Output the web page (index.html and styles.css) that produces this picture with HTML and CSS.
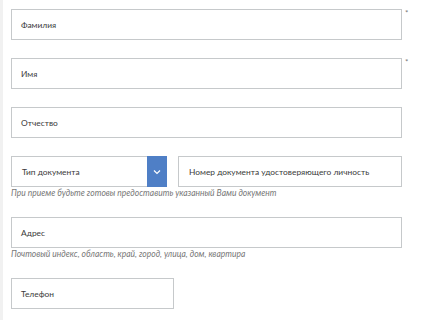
FILE: index.html
```html
<!DOCTYPE html>
<html lang="ru">
<head>
<meta charset="utf-8">
<link rel="stylesheet" href="styles.css">
</head>
<body>
<div class="page">
  <form class="form">
    <div class="group">
      <div class="row-req">
        <div class="field wide">Фамилия</div>
        <span class="req">*</span>
      </div>
    </div>
    <div class="group">
      <div class="row-req">
        <div class="field wide">Имя</div>
        <span class="req">*</span>
      </div>
    </div>
    <div class="group">
      <div class="field wide">Отчество</div>
    </div>
    <div class="group">
      <div class="doc-row">
        <div class="select">
          <span class="select-label">Тип документа</span>
          <span class="select-btn">
            <svg width="8" height="6" viewBox="0 0 8 6"><polyline points="1,1.5 4,4.5 7,1.5" fill="none" stroke="#fff" stroke-width="1.2"/></svg>
          </span>
        </div>
        <div class="field number">Номер документа удостоверяющего личность</div>
      </div>
      <div class="hint">При приеме будьте готовы предоставить указанный Вами документ</div>
    </div>
    <div class="group">
      <div class="field wide">Адрес</div>
      <div class="hint">Почтовый индекс, область, край, город, улица, дом, квартира</div>
    </div>
    <div class="group">
      <div class="field phone">Телефон</div>
    </div>
  </form>
</div>
</body>
</html>
```

FILE: styles.css
```css
html, body {
  margin: 0;
  padding: 0;
  background: #fff;
}
.page {
  width: 421px;
  height: 320px;
  box-sizing: border-box;
  border-left: 3px solid #f1f1f1;
  padding: 9px 0 0 8px;
  font-family: Lato, "Noto Sans", sans-serif;
  color: #444;
  overflow: hidden;
}
.form {
  display: flex;
  flex-direction: column;
  gap: 18px;
}
.group {
  display: flex;
  flex-direction: column;
}
.row-req {
  display: flex;
  align-items: flex-start;
}
.req {
  font-size: 8px;
  line-height: 8px;
  color: #777;
  margin-left: 3px;
}
.field {
  height: 31px;
  box-sizing: border-box;
  border: 1px solid #c6c9cb;
  background: #fff;
  padding: 0 9px;
  display: flex;
  align-items: center;
  font-size: 8.4px;
  color: #3a3a3a;
  white-space: nowrap;
}
.wide {
  width: 391px;
}
.doc-row {
  display: flex;
  gap: 11px;
}
.select {
  width: 156px;
  height: 31px;
  box-sizing: border-box;
  border: 1px solid #c6c9cb;
  display: flex;
  align-items: stretch;
}
.select-label {
  flex: 1;
  display: flex;
  align-items: center;
  padding-left: 10px;
  font-size: 8.4px;
  color: #3a3a3a;
}
.select-btn {
  width: 20px;
  background: #4f7fc6;
  display: flex;
  align-items: center;
  justify-content: center;
  margin: -1px -1px -1px 0;
}
.number {
  width: 224px;
  padding-left: 10px;
}
.phone {
  width: 163px;
}
.hint {
  height: 12px;
  line-height: 13px;
  font-size: 8.5px;
  font-style: italic;
  color: #777;
  white-space: nowrap;
}
```
